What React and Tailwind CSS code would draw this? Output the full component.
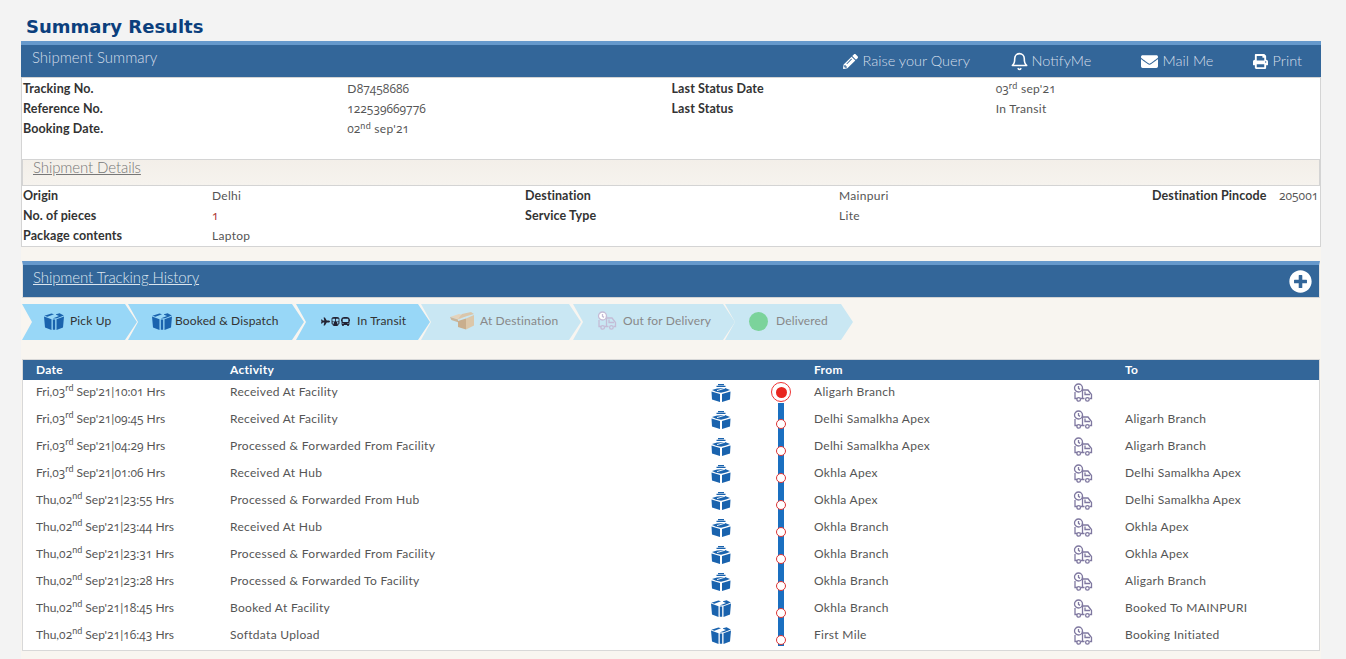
import { FaPencilAlt, FaEnvelope, FaPrint, FaPlusCircle, FaPlane, FaSubway, FaBus } from "react-icons/fa";
import { LuBell } from "react-icons/lu";

const rows = [
  ["Fri,03", "rd", "Sep'21|10:01 Hrs", "Received At Facility", "Aligarh Branch", ""],
  ["Fri,03", "rd", "Sep'21|09:45 Hrs", "Received At Facility", "Delhi Samalkha Apex", "Aligarh Branch"],
  ["Fri,03", "rd", "Sep'21|04:29 Hrs", "Processed & Forwarded From Facility", "Delhi Samalkha Apex", "Aligarh Branch"],
  ["Fri,03", "rd", "Sep'21|01:06 Hrs", "Received At Hub", "Okhla Apex", "Delhi Samalkha Apex"],
  ["Thu,02", "nd", "Sep'21|23:55 Hrs", "Processed & Forwarded From Hub", "Okhla Apex", "Delhi Samalkha Apex"],
  ["Thu,02", "nd", "Sep'21|23:44 Hrs", "Received At Hub", "Okhla Branch", "Okhla Apex"],
  ["Thu,02", "nd", "Sep'21|23:31 Hrs", "Processed & Forwarded From Facility", "Okhla Branch", "Okhla Apex"],
  ["Thu,02", "nd", "Sep'21|23:28 Hrs", "Processed & Forwarded To Facility", "Okhla Branch", "Aligarh Branch"],
  ["Thu,02", "nd", "Sep'21|18:45 Hrs", "Booked At Facility", "Okhla Branch", "Booked To MAINPURI"],
  ["Thu,02", "nd", "Sep'21|16:43 Hrs", "Softdata Upload", "First Mile", "Booking Initiated"],
];

// digit runs get a font that has old-style figures
function Num({ text }) {
  return text.split(/(\d+)/).map((part, i) =>
    i % 2 ? (
      <span key={i} className="font-['Open_Sans'] oldstyle-nums tracking-normal">
        {part}
      </span>
    ) : (
      part
    )
  );
}

function OpenBox() {
  return (
    <svg width="20" height="18" viewBox="0 0 20 18">
      <path d="M0.5 7.5l8.5 2.6V18L1 15.5zM19.5 7.5L11 10.1V18l8-2.5z" fill="#1a63ae" />
      <path d="M1 6l5-1.6L14 4l5 2-4 1.6-5 1.2-5-1z" fill="#1a63ae" />
      <path d="M7 0.6h6M5.5 2.4h9" stroke="#1a63ae" strokeWidth="1.1" fill="none" />
      <path d="M6 6.6l8-2.4" stroke="#fff" strokeWidth="0.9" />
    </svg>
  );
}

function ClosedBox() {
  return (
    <svg width="20" height="17" viewBox="0 0 20 17">
      <path d="M0 3.6L7.5 6.2V17L1 14.6zM20 3.6L12.5 6.2V17l6.5-2.4zM8.8 6.6v10.2h2.4V6.6z" fill="#1a63ae" />
      <path d="M0.4 2.8L7.4 0.4 10 1.2 3.4 3.8zM12 1.2L15.6.2 19.8 2.6 13 5.2 8.6 5.4 15 3 12 1.8z" fill="#1a63ae" />
    </svg>
  );
}

function ClockTruck({ color = "#7f78a0" }) {
  return (
    <svg width="20" height="20" viewBox="0 0 20 20" fill="none" stroke={color} strokeWidth="1.3">
      <circle cx="5.5" cy="5" r="4" fill="#fff" />
      <path d="M5.5 3v2.4l1.5 1" />
      <path d="M2 9v6.5h2M7.5 15.5h4M9.5 5v10.5M9.5 7h5.5l3.5 4.5v4h-2" />
      <path d="M12 8.5v3h5" />
      <circle cx="5.7" cy="16.4" r="1.8" />
      <circle cx="14.4" cy="16.4" r="1.8" />
    </svg>
  );
}

function Carton() {
  return (
    <svg width="24" height="18" viewBox="0 0 24 18">
      <path d="M0 5l9-3 7 2-7 3.4z" fill="#e4d3bb" />
      <path d="M0 5l8 2.6v2.6L1.4 8z" fill="#c9b59a" />
      <path d="M8 7l6-2 10-3-3-2-9 2z" fill="#d9c6ab" />
      <path d="M8 9l8-2.6v11L8 15z" fill="#c9ae8d" />
      <path d="M16 6.4l8-3.4v10.4l-8 4z" fill="#dcc7a9" />
    </svg>
  );
}

function Stage({ className, children }) {
  return (
    <div
      className={`h-9 flex items-center pb-[2px] tracking-[0.15px] [clip-path:polygon(0_0,calc(100%-12px)_0,100%_50%,calc(100%-12px)_100%,0_100%,10px_50%)] ${className}`}
    >
      {children}
    </div>
  );
}

const label = "font-bold text-[12.5px] text-[#333] tracking-[0.1px]";

export default function App() {
  return (
    <div className="h-[659px] overflow-hidden bg-[#f3f3f3] font-['Lato',sans-serif] text-[12px] tracking-[0.3px] text-[#555]">
      <h1 className="pt-[15px] pl-[26px] h-[41px] font-['DejaVu_Sans',sans-serif] font-bold text-[18px] tracking-normal leading-[24px] text-[#0b3f7d]">
        Summary Results
      </h1>

      <div className="w-[1300px] ml-[21px] bg-[#f8f5f0] h-[618px]">
        {/* Shipment summary */}
        <div className="bg-white border-x border-b border-[#d4d4d4] h-[206px]">
          <div className="-mx-px flex justify-between bg-[#336699] border-t-4 border-t-[#6699cc] border-b border-b-[#d4d4d4] h-[37px] pl-[11px] pr-[19px] font-light text-[15px] tracking-normal text-[#d3deea] whitespace-nowrap">
            <span className="pt-[1px]">Shipment Summary</span>
            <div className="flex items-center text-[14.5px]">
              <FaPencilAlt className="text-white text-[15px] mr-[5px]" />
              <span className="w-[107px]">Raise your Query</span>
              <LuBell className="text-white text-[19px] ml-[40px] mr-[3px]" />
              <span className="w-[58px]">NotifyMe</span>
              <FaEnvelope className="text-white text-[17px] ml-[51px] mr-[5px]" />
              <span className="w-[50px]">Mail Me</span>
              <FaPrint className="text-white text-[15px] ml-[40px] mr-[5px]" />
              <span>Print</span>
            </div>
          </div>

          <div className="grid grid-cols-4 content-start pl-px pt-[1px] h-[81px] [&>*]:h-5 [&>*]:leading-5">
            <b className={label}>Tracking No.</b>
            <span><Num text="D87458686" /></span>
            <b className={label}>Last Status Date</b>
            <span>
              <Num text="03" />
              <sup className="text-[9px]">rd</sup> sep'<Num text="21" />
            </span>
            <b className={label}>Reference No.</b>
            <span><Num text="122539669776" /></span>
            <b className={label}>Last Status</b>
            <span>In Transit</span>
            <b className={label}>Booking Date.</b>
            <span>
              <Num text="02" />
              <sup className="text-[9px]">nd</sup> sep'<Num text="21" />
            </span>
          </div>

          <div className="h-[27px] bg-linear-to-b from-[#f3efe9] to-[#f6f3ee] border border-[#d4d4d4] pl-[10px] font-light text-[15px] tracking-[-0.1px] leading-[15px] text-[#777] underline">
            Shipment Details
          </div>

          <div className="grid grid-cols-[189px_313px_314px_313px_127px_1fr] pl-px h-[60px] [&>*]:h-5 [&>*]:leading-5">
            <b className={label}>Origin</b>
            <span>Delhi</span>
            <b className={label}>Destination</b>
            <span>Mainpuri</span>
            <b className={`${label} whitespace-nowrap`}>Destination Pincode</b>
            <span><Num text="205001" /></span>
            <b className={label}>No. of pieces</b>
            <span className="text-[#a33]"><Num text="1" /></span>
            <b className={label}>Service Type</b>
            <span>Lite</span>
            <span />
            <span />
            <b className={label}>Package contents</b>
            <span>Laptop</span>
          </div>
        </div>

        {/* Tracking history */}
        <div className="mt-[14px]">
          <div className="mx-px flex justify-between items-center bg-[#336699] border-t-4 border-t-[#6699cc] border-x border-x-[#e4e4e4] border-b border-b-[#d4d4d4] h-[37px] pl-[10px] pr-[7px] font-light text-[15px] tracking-[-0.1px] text-[#dbe5ef] pb-[7px]">
            <span className="underline">Shipment Tracking History</span>
            <FaPlusCircle className="text-white text-[23px] mt-[7px]" />
          </div>

          <div className="flex mt-[6px] h-9 ml-px">
            <Stage className="w-[115px] bg-[#98d7f7] text-[#333] pl-[22px]">
              <ClosedBox />
              <span className="ml-[6px]">Pick Up</span>
            </Stage>
            <Stage className="w-[176px] -ml-[9px] bg-[#98d7f7] text-[#333] pl-[24px]">
              <ClosedBox />
              <span className="ml-[3px]">Booked &amp; Dispatch</span>
            </Stage>
            <Stage className="w-[134px] -ml-[8px] bg-[#98d7f7] text-[#333] pl-[25px]">
              <FaPlane className="text-[9px] text-[#223]" />
              <FaSubway className="text-[9px] text-[#223] ml-[1px]" />
              <FaBus className="text-[9px] text-[#223] ml-[1px]" />
              <span className="ml-[7px]">In Transit</span>
            </Stage>
            <Stage className="w-[160px] -ml-[9px] bg-[#c9e7f3] text-[#888] pl-[29px]">
              <Carton />
              <span className="ml-[6px]">At Destination</span>
            </Stage>
            <Stage className="w-[162px] -ml-[8px] bg-[#c9e7f3] text-[#888] pl-[24px]">
              <ClockTruck color="#c4bcd6" />
              <span className="ml-[6px]">Out for Delivery</span>
            </Stage>
            <Stage className="w-[128px] -ml-[10px] bg-[#c9e7f3] text-[#888] pl-[24px]">
              <span className="w-[19px] h-[19px] rounded-full bg-[#7bd39b]" />
              <span className="ml-[8px]">Delivered</span>
            </Stage>
          </div>

          <div className="mx-px mt-[19px] bg-white border border-[#d8d8d8] h-[292px] overflow-hidden">
            <div className="grid grid-cols-[194px_584px_311px_1fr] pl-[13px] h-5 leading-5 bg-[#336699] text-white font-bold">
              <span>Date</span>
              <span>Activity</span>
              <span>From</span>
              <span>To</span>
            </div>
            <div className="-mt-px">
              {rows.map((r, i) => (
                <div key={i} className="flex items-center h-[27px] pl-[13px] [&>.txt]:pb-[2px]">
                  <span className="txt w-[194px] shrink-0 tracking-normal">
                    <Num text={r[0]} />
                    <sup className="text-[9px]">{r[1]}</sup> <Num text={r[2]} />
                  </span>
                  <span className="txt w-[481px] shrink-0">{r[3]}</span>
                  <span className="w-[20px] shrink-0">{i < 8 ? <OpenBox /> : <ClosedBox />}</span>
                  <span className="relative w-[83px] h-[27px] shrink-0">
                    {/* timeline */}
                    <span
                      className={`absolute left-[47px] w-[6px] bg-[#1a6fc0] ${i === 0 ? "top-[24px] h-[3px]" : i === 9 ? "top-0 h-[24px]" : "top-0 h-[27px]"}`}
                    />
                    {i === 0 ? (
                      <span className="absolute left-[40px] top-[3px] w-5 h-5 rounded-full bg-white border border-[#e33] flex items-center justify-center">
                        <span className="w-[11px] h-[11px] rounded-full bg-[#e8261f]" />
                      </span>
                    ) : (
                      <span className="absolute left-[45px] top-[13px] w-[10px] h-[10px] rounded-full bg-white border border-[#d33]" />
                    )}
                  </span>
                  <span className="txt w-[259px] shrink-0">{r[4]}</span>
                  <span className="w-[52px] shrink-0">
                    <ClockTruck />
                  </span>
                  <span className="txt">{r[5]}</span>
                </div>
              ))}
            </div>
          </div>
        </div>
      </div>
    </div>
  );
}
